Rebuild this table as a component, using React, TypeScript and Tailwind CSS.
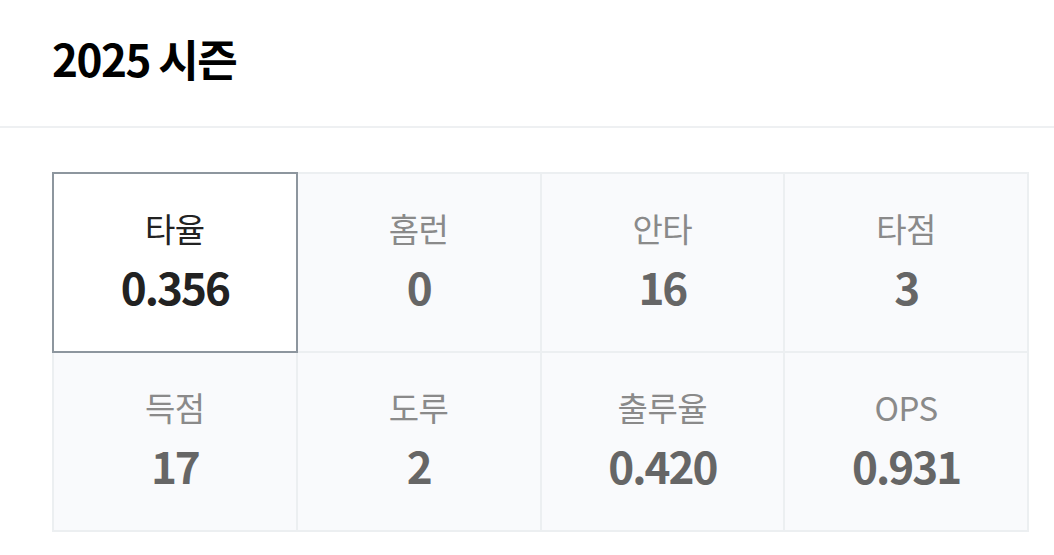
const stats = [
  { label: '타율', value: '0.356', active: true },
  { label: '홈런', value: '0' },
  { label: '안타', value: '16' },
  { label: '타점', value: '3' },
  { label: '득점', value: '17' },
  { label: '도루', value: '2' },
  { label: '출루율', value: '0.420' },
  { label: 'OPS', value: '0.931' },
];

export default function App() {
  return (
    <div className="min-h-screen bg-white font-['Noto_Sans_CJK_KR',sans-serif]">
      {/* Header */}
      <div className="h-[128px] px-[52px] flex items-center border-b-2 border-[#eef0f2]">
        <h1 className="text-[44px] font-bold text-black tracking-[-1.5px] leading-none pb-[10px]">2025 시즌</h1>
      </div>

      {/* Stats grid */}
      <div className="px-[52px] pt-[44px]">
        <div className="grid grid-cols-4 border-l-2 border-t-2 border-[#eceff1] w-[977px]">
          {stats.map((s) => (
            <div
              key={s.label}
              className={`relative h-[179px] flex flex-col items-center justify-center gap-[13px] border-r-2 border-b-2 border-[#eceff1] ${s.active ? 'bg-white' : 'bg-[#f9fafc]'}`}
            >
              {s.active && (
                <div className="absolute -left-[2px] -top-[2px] -right-[2px] -bottom-[2px] border-2 border-[#8d969e]"></div>
              )}
              <span className={`text-[33px] leading-none tracking-[-0.5px] ${s.active ? 'text-[#222]' : 'text-[#8a8a8a]'}`}>{s.label}</span>
              <span className={`text-[44px] font-bold leading-[56px] tracking-[-2px] ${s.active ? 'text-[#222]' : 'text-[#666]'}`}>{s.value}</span>
            </div>
          ))}
        </div>
      </div>
    </div>
  );
}
